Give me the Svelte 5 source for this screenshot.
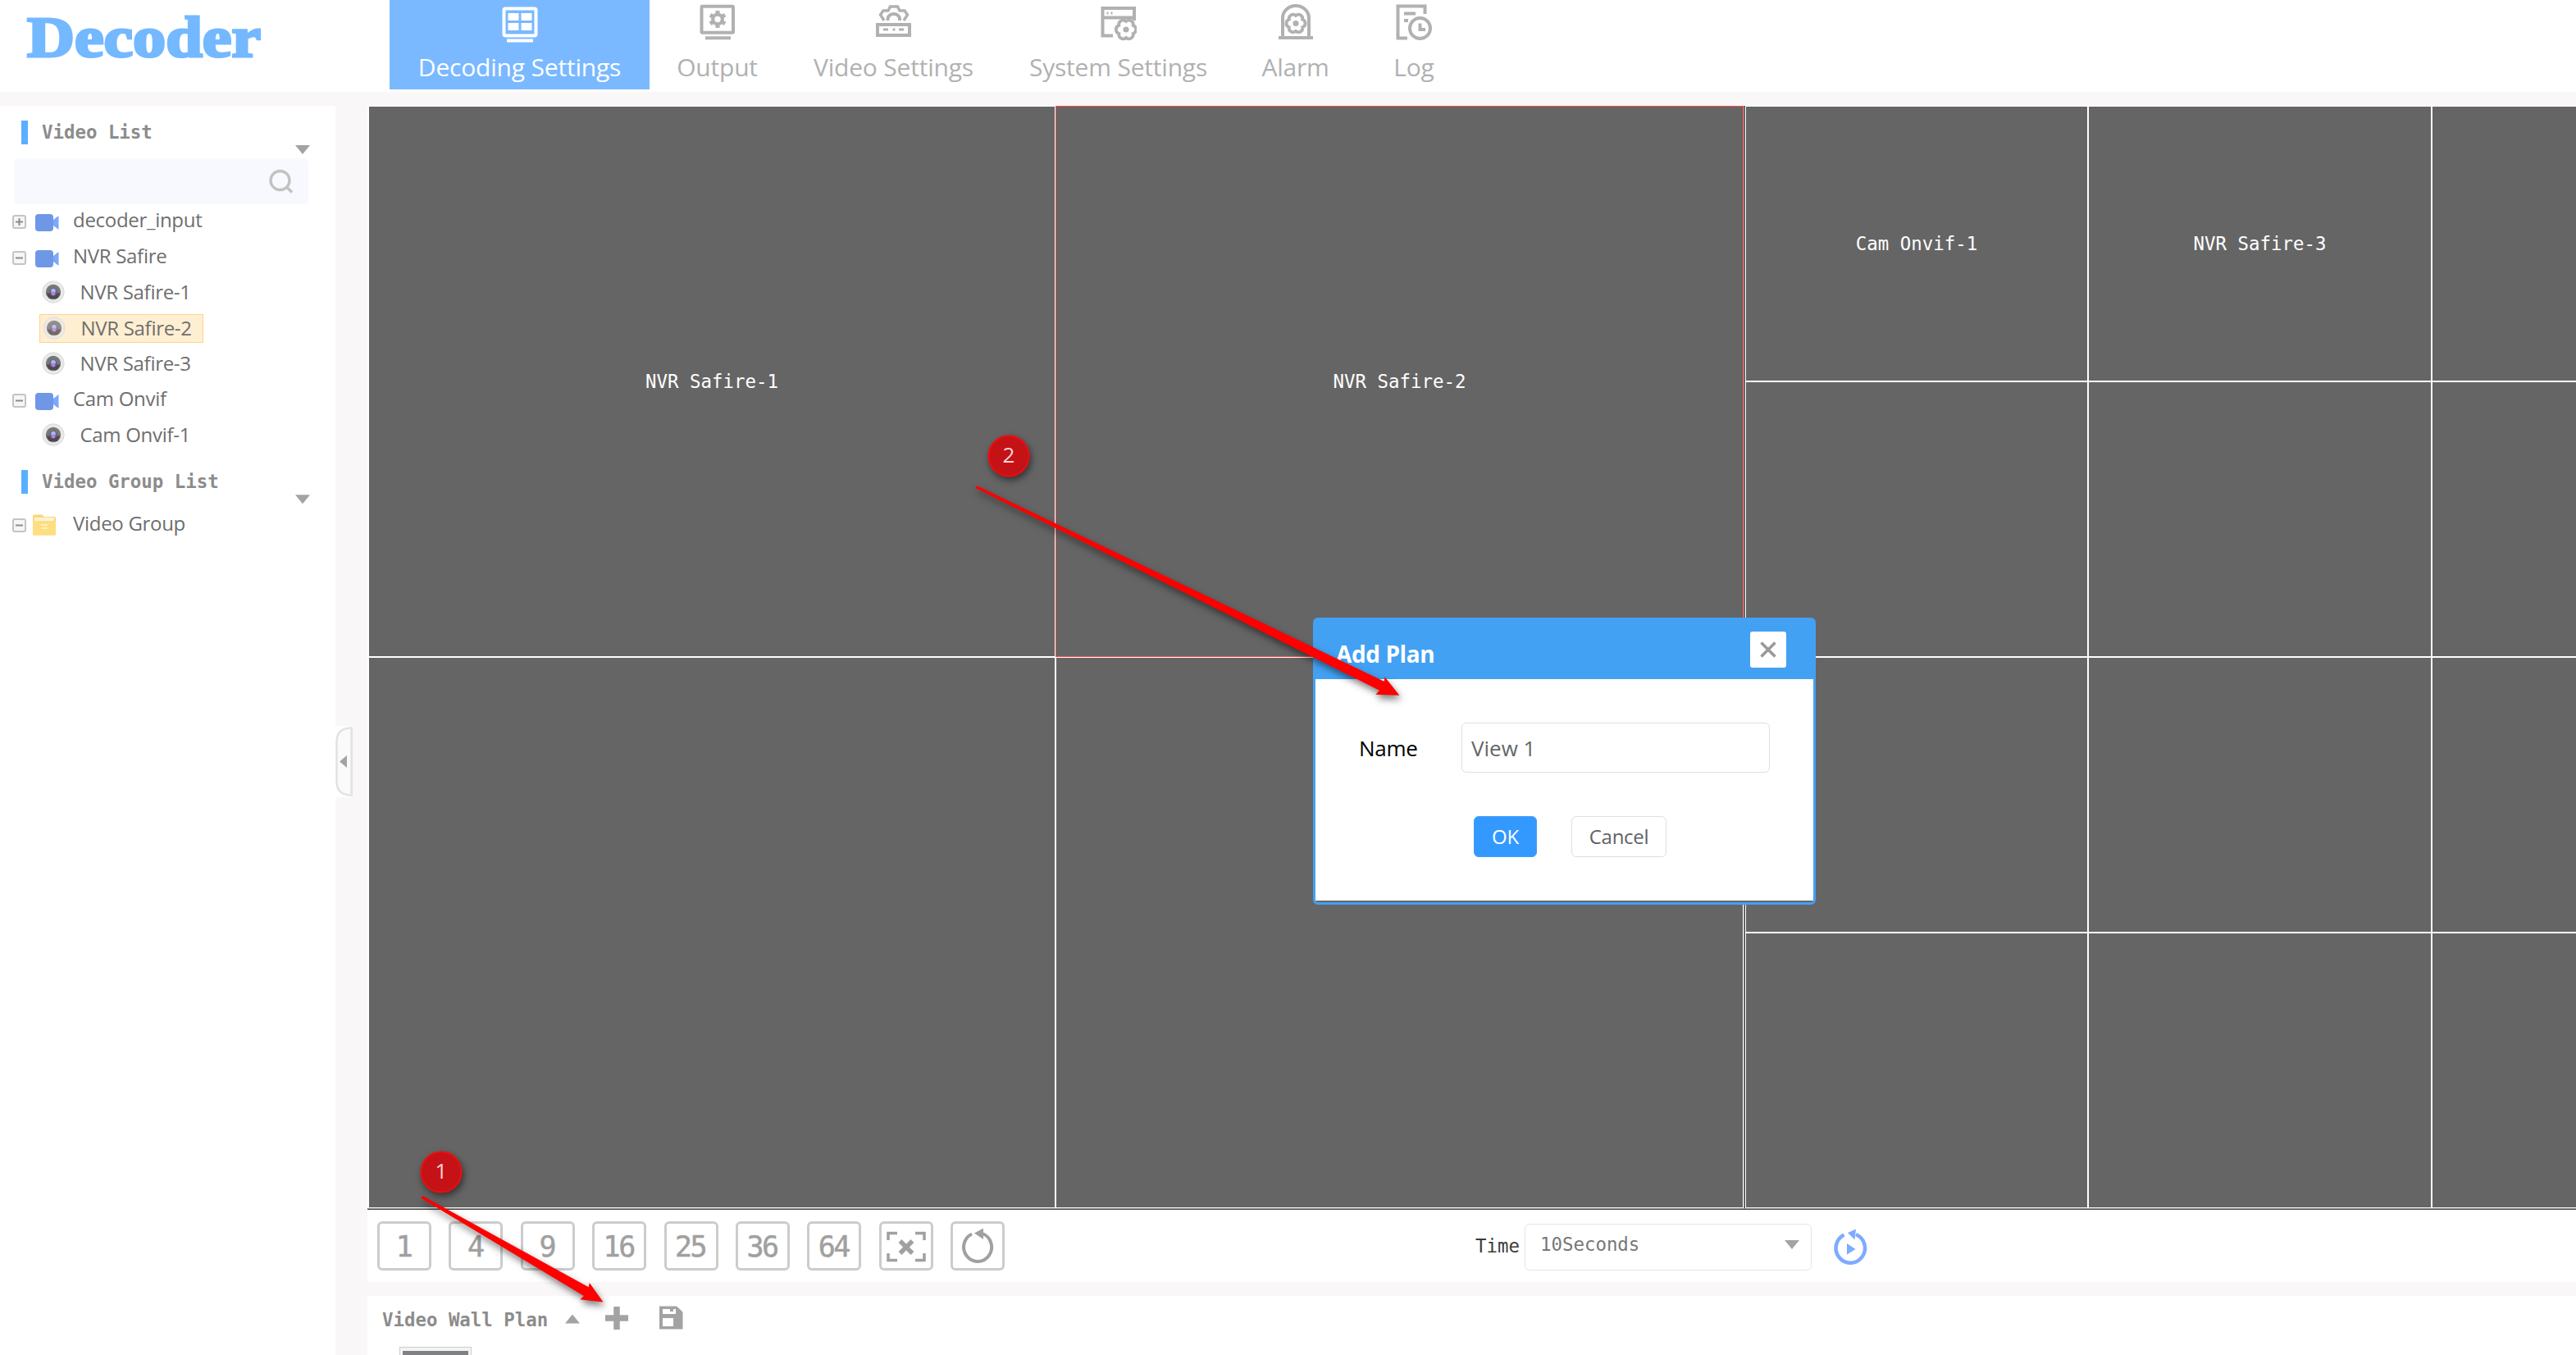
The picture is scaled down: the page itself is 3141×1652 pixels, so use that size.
<script lang="ts">
	let planName = "View 1"; // The name typed into the dialog

	const tabs = [
		{ id: "decoding", label: "Decoding Settings", width: 317 },
		{ id: "output", label: "Output", width: 165 },
		{ id: "video", label: "Video Settings", width: 265 },
		{ id: "system", label: "System Settings", width: 283 },
		{ id: "alarm", label: "Alarm", width: 149 },
		{ id: "log", label: "Log", width: 140 },
	];

	const devices = [
		{ name: "decoder_input", open: false, channels: [] },
		{ name: "NVR Safire", open: true, channels: ["NVR Safire-1", "NVR Safire-2", "NVR Safire-3"] },
		{ name: "Cam Onvif", open: true, channels: ["Cam Onvif-1"] },
	];
	const selected = "NVR Safire-2";

	const layouts = [1, 4, 9, 16, 25, 36, 64];

	// The windows of the two screens, row by row
	const leftScreen = ["NVR Safire-1", "NVR Safire-2", "", ""];
	const rightScreen = ["Cam Onvif-1", "NVR Safire-3", ...Array(14).fill("")];

	/**
	 * Outline of a gear with six rounded teeth
	 * @param cx center x
	 * @param cy center y
	 * @param r distance from the center to the notches
	 */
	function gear(cx: number, cy: number, r: number) {
		let d = "";
		for (let i = 0; i <= 6; i++) {
			const a = (i * Math.PI) / 3;
			const x = (cx + r * Math.cos(a)).toFixed(2);
			const y = (cy + r * Math.sin(a)).toFixed(2);
			d += i == 0 ? `M${x} ${y}` : `A${r * 0.53} ${r * 0.53} 0 0 1 ${x} ${y}`;
		}
		return d + "Z";
	}
</script>

<div class="page">
	<header>
		<div class="logo">
			<svg width="320" height="100" viewBox="0 0 320 100">
				<text x="2" y="68" textLength="285" lengthAdjust="spacingAndGlyphs">Decoder</text>
			</svg>
		</div>
		<nav>
			{#each tabs as tab}
				<a class="tab" class:active={tab.id == "decoding"} href="#{tab.id}" style="width: {tab.width}px">
					<svg class="tab-icon" width="44" height="48" viewBox="0 0 44 48">
						{#if tab.id == "decoding"}
							<rect x="2.5" y="6.5" width="39" height="33" rx="2" />
							<path class="solid" d="M7 12h13v9H7zM23 12h13v9H23zM7 24h13v9H7zM23 24h13v9H23z" transform="translate(.5)" />
							<path d="M6 45.500h32" />
						{:else if tab.id == "output"}
							<rect x="2.5" y="3.8" width="38.5" height="32" rx="1" />
							<circle cx="22" cy="19.5" r="5.8" stroke-width="4.2" />
							<path d="M22 9v4M22 26v4M13 14.2l3 2M28 23l3 2M13 24.8l3-2M28 16l3-2" stroke-width="5" />
							<path d="M7 42.3h31" />
						{:else if tab.id == "video"}
							<rect x="2" y="26" width="39" height="13" />
							<path d="M9 32h6M20.5 32h3M28 32h6" stroke-width="3" />
							<path d="M10 21l-4.500-7 3.500-5h6l2.500-5h9l2.500 5h6l3.500 5-4.500 7" stroke-width="3.4" />
							<path d="M14.500 21v-2a7.200 6 0 0 1 14.500 0v2" />
						{:else if tab.id == "system"}
							<path d="M15 39.500H2.500V6h38.500v15M2.500 17.500H41" />
							<path d="M8.500 10.500v3M13.500 10.500v3" stroke-width="2" />
							<path d={gear(31, 32, 10)} fill="#fff" stroke-width="3.8" transform="rotate(30 31 32)" />
							<circle class="solid" cx="31" cy="32" r="3.6" />
						{:else if tab.id == "alarm"}
							<path d="M6 40V18a16 15 0 0 1 32 0v22M1 42h42" />
							<path d={gear(22, 24.5, 9.5)} stroke-width="3.8" transform="rotate(30 22 24.5)" />
							<circle class="solid" cx="22" cy="24.5" r="3.6" />
						{:else}
							<path d="M14 42.500H2.500V3.500h33V13M10 12.500h14M10 21h5" />
							<circle cx="29.500" cy="30.500" r="12.500" />
							<path d="M29.500 24.500V32H36" />
						{/if}
					</svg>
					<span>{tab.label}</span>
				</a>
			{/each}
		</nav>
	</header>

	<div class="body">
		<aside>
			<div class="list-title">
				<h2>Video List</h2>
				<i class="arrow-down"></i>
			</div>
			<div class="search">
				<svg width="32" height="32" viewBox="0 0 32 32">
					<circle cx="14.500" cy="14" r="11.500" />
					<path d="M22 21.500l7 7" />
				</svg>
			</div>
			<ul class="tree">
				{#each devices as device}
					<li class="row">
						<svg class="toggle" width="17" height="17" viewBox="0 0 17 17">
							<rect x="1" y="1" width="15" height="15" rx="2" />
							<path d={device.open ? "M4 8.500h9" : "M4 8.500h9M8.500 4v9"} />
						</svg>
						<svg class="camera" width="29" height="21" viewBox="0 0 29 21">
							<rect width="22" height="21" rx="4" fill="#6e97e6" />
							<path d="M22 7l6.500-5v17L22 14z" fill="#7ea7fb" />
						</svg>
						<span>{device.name}</span>
					</li>
					{#each device.channels as channel}
						<li class="row channel">
							<div class="channel-box" class:selected={channel == selected}>
								<svg width="28" height="28" viewBox="0 0 28 28">
									<circle cx="14" cy="14" r="13.200" fill="#e9e9e9" stroke="#d9d9d9" />
									<circle cx="14" cy="14" r="9.200" fill="#777" />
									<path d="M5.500 15.500h17l-3.500 6.500h-10z" fill="#4b4b4b" />
									<circle cx="14" cy="14" r="4.600" fill="#6a5c88" />
									<circle cx="14" cy="12.700" r="2.800" fill="#9bc4ee" />
									<circle cx="14" cy="16" r="2.400" fill="#c279e4" />
								</svg>
								<span>{channel}</span>
							</div>
						</li>
					{/each}
				{/each}
			</ul>
			<div class="list-title group">
				<h2>Video Group List</h2>
				<i class="arrow-down"></i>
			</div>
			<ul class="tree">
				<li class="row">
					<svg class="toggle" width="17" height="17" viewBox="0 0 17 17">
						<rect x="1" y="1" width="15" height="15" rx="2" />
						<path d="M4 8.500h9" />
					</svg>
					<svg class="folder" width="28" height="26" viewBox="0 0 28 26">
						<path d="M0 2q0-1.500 1.500-1.500h10l2 2.500h13q1.500 0 1.500 1.500V24q0 1.500-1.500 1.500h-25Q0 25.500 0 24z" fill="#fbd777" />
						<path d="M2 4h24v4H2z" fill="#fff3d2" />
						<path d="M0 8h28v16q0 1.500-1.500 1.500h-25Q0 25.500 0 24z" fill="#fddf81" />
						<path d="M10 13h8M10 17h8" stroke="#fff0b8" stroke-width="2" />
					</svg>
					<span>Video Group</span>
				</li>
			</ul>
		</aside>

		<div class="gutter">
			<div class="collapse">
				<svg width="21" height="87" viewBox="0 0 21 87">
					<path d="M19.700 2.500H17Q1.500 4 1.500 19V68Q1.500 83 17 84.500h2.700z" fill="#fafafa" stroke="#e2e2e2" stroke-width="2.500" />
					<path d="M14 36v15l-9-7.500z" fill="#a3a3a3" />
				</svg>
			</div>
		</div>

		<main>
			<section class="wall-panel">
				<div class="wall">
					<div class="screen left">
						{#each leftScreen as name}
							<div class="window" class:current={name == selected}>{name}</div>
						{/each}
					</div>
					<div class="screen right">
						{#each rightScreen as name}
							<div class="window">{name}</div>
						{/each}
					</div>
				</div>
				<div class="toolbar">
					<div class="layouts">
						{#each layouts as layout}
							<button class="layout">{layout}</button>
						{/each}
						<button class="layout">
							<svg width="48" height="38" viewBox="0 0 48 38">
								<path d="M2 11V2.500h11M35 2.500h11V11M46 27v8.500H35M13 35.500H2V27" stroke-width="3.500" />
								<path d="M16.500 12l15 15M31.500 12l-15 15" stroke-width="5.500" />
							</svg>
						</button>
						<button class="layout">
							<svg width="42" height="44" viewBox="0 0 42 44">
								<path d="M14 6.500A17 17.500 0 1 0 27 6" stroke-width="4" />
								<path class="solid" d="M17 5.500L28-.5 28 13z" />
							</svg>
						</button>
					</div>
					<label class="time">
						<span>Time</span>
						<div class="select">
							10Seconds
							<i class="arrow-down"></i>
						</div>
					</label>
					<svg class="cycle" width="42" height="46" viewBox="0 0 42 46">
						<path d="M13.500 7.500A17.700 18 0 1 0 28 7" fill="none" stroke="#7eaaff" stroke-width="4.500" />
						<path d="M18 5l10-4.500-1.500 13z" fill="#7eaaff" />
						<path d="M17 18l10.500 7L17 31.500z" fill="#7eaaff" />
					</svg>
				</div>
			</section>
			<section class="plan-panel">
				<div class="plan-bar">
					<h2>Video Wall Plan</h2>
					<i class="arrow-up"></i>
					<svg class="plus" width="30" height="30" viewBox="0 0 30 30">
						<path d="M15 1v28M1 15h28" stroke="#a3a3a3" stroke-width="7.500" />
					</svg>
					<svg class="save" width="29" height="29" viewBox="0 0 29 29">
						<path fill="#a3a3a3" fill-rule="evenodd" d="M0 .5h21l7.500 7V28.500H0zM4 4v6h16V4h-3v3h-4V4zM4 15v10h13V15z" />
					</svg>
				</div>
				<div class="thumb"><div></div></div>
			</section>
		</main>
	</div>

	<div class="dialog">
		<div class="dialog-head">
			<h3>Add Plan</h3>
			<button class="close" aria-label="Close">
				<svg width="44" height="44" viewBox="0 0 44 44">
					<path d="M13.500 13.500l17 17M30.500 13.500l-17 17" stroke="#999" stroke-width="3.500" />
				</svg>
			</button>
		</div>
		<div class="dialog-body">
			<label class="field">
				<span>Name</span>
				<input bind:value={planName} />
			</label>
			<div class="buttons">
				<button class="ok">OK</button>
				<button class="cancel">Cancel</button>
			</div>
		</div>
	</div>

	<!-- Numbered steps drawn over the page -->
	<svg class="steps" width="3141" height="1652" viewBox="0 0 3141 1652">
		<g class="arrows">
			<path d="M513 1460.500l2.500-2.500L717.700 1569.300 718.800 1564 735.500 1587.500 707.300 1584.300 712 1580z" />
			<path d="M1189.500 595l1.500-3L1687.700 830.700 1688.500 825.300 1706.400 847.700 1677.400 846.700 1682 841.700z" />
		</g>
		<g class="badges">
			<circle cx="538" cy="1429" r="24.500" />
			<circle cx="1230" cy="556" r="24.500" />
		</g>
		<text x="538" y="1437">1</text>
		<text x="1230" y="564">2</text>
	</svg>
</div>

<style>
	:global(body) {
		margin: 0;
		overflow: hidden;
	}

	.page {
		position: relative;
		width: 3141px;
		height: 1652px;
		overflow: hidden;
		background: #f9f7f8;
		font-family: "Open Sans", "Noto Sans", sans-serif;
		color: #6e6e6e;
	}

	.page * {
		box-sizing: border-box;
	}

	svg {
		display: block;
		flex: none;
	}

	h2, h3, ul {
		margin: 0;
		padding: 0;
		list-style: none;
	}

	button {
		padding: 0;
		font: inherit;
		letter-spacing: inherit;
	}

	header {
		display: flex;
		height: 112px;
		background: #fff;
	}

	.logo {
		width: 475px;
		padding: 1px 0 0 31px;
	}

	.logo text {
		font: bold 69px "Liberation Serif", serif;
		fill: #74b8ff;
		stroke: #74b8ff;
		stroke-width: 3px;
	}

	nav {
		display: flex;
		height: 109px;
	}

	.tab {
		display: flex;
		flex-direction: column;
		align-items: center;
		padding-top: 4px;
		color: #b1b1b1;
		font-size: 30px;
		line-height: 40px;
		letter-spacing: -0.2px;
		text-decoration: none;
		white-space: nowrap;
	}

	.tab span {
		margin-top: 10px;
	}

	.tab.active {
		background: #7ab9ff;
		color: #fff;
	}

	.tab-icon {
		fill: none;
		stroke: currentColor;
		stroke-width: 4px;
	}

	.solid {
		fill: currentColor;
		stroke: none;
	}

	.body {
		display: flex;
		height: 1523px;
		margin-top: 17px;
	}

	aside {
		width: 409px;
		background: #fff;
	}

	.list-title {
		display: flex;
		justify-content: space-between;
		height: 47px;
		margin: 18px 31px 0 26px;
	}

	h2 {
		font: bold 22.4px/29px "DejaVu Sans Mono", monospace;
		color: #8c8c8c;
	}

	.list-title h2 {
		height: 29px;
		padding-left: 17px;
		border-left: 8px solid #5aafff;
	}

	.arrow-down {
		width: 18px;
		height: 11px;
		background: #a3a3a3;
		clip-path: polygon(0 0, 100% 0, 50% 100%);
	}

	.list-title .arrow-down {
		margin-top: 30px;
	}

	.search {
		display: flex;
		justify-content: flex-end;
		width: 359px;
		height: 56px;
		margin: -1px 0 0 17px;
		padding: 13px 17px;
		border-radius: 6px;
		background: #f7f9fe;
	}

	.search svg {
		fill: none;
		stroke: #c2c2c2;
		stroke-width: 3.4px;
	}

	.search + .tree {
		margin-top: -1px;
	}

	.row {
		display: flex;
		align-items: center;
		height: 43.6px;
		padding-left: 15px;
		font-size: 24px;
		line-height: 34px;
		letter-spacing: -0.3px;
		white-space: nowrap;
	}

	.toggle {
		margin: 2px 11px 0 0;
		fill: #f6f6f6;
		stroke: #c4c4c4;
		stroke-width: 2px;
	}

	.toggle path {
		stroke: #8c8c8c;
	}

	.camera {
		margin: 4px 17px 0 0;
	}

	.row > span {
		margin-top: -3px;
	}

	.channel {
		padding-left: 48px;
	}

	.channel-box {
		display: flex;
		align-items: center;
		gap: 18.5px;
		height: 35px;
		margin-top: -1px;
		padding: 0 10px 1px 3px;
	}

	.channel-box.selected {
		width: 200px;
		border: 1px solid #ffd38c;
		background: #ffefd2;
	}

	.selected svg {
		opacity: 0.8;
	}

	.list-title.group {
		margin-top: 20px;
	}

	.group + .tree {
		margin-top: -2px;
	}

	.folder {
		margin: 0 21px 0 -3px;
	}

	.gutter {
		display: flex;
		align-items: flex-start;
		width: 39px;
	}

	.collapse {
		margin-top: 756px;
		background: #fff;
	}

	main {
		flex: none;
		width: 2693px;
		overflow: hidden;
	}

	.wall-panel {
		height: 1434px;
		background: #fff;
	}

	.wall {
		display: flex;
		height: 1346px;
		padding-left: 1px;
		border-bottom: 1px solid #4a4a4a;
		background: linear-gradient(#fff, #fff) 0 0 / 1px 1344px no-repeat, #8a8a8a;
	}

	.screen {
		display: grid;
		flex: none;
		height: 1344px;
	}

	.left {
		grid-template: 672px 672px / 838px 839px;
	}

	.right {
		grid-template: repeat(4, 336px) / 418px 419px 419px 419px;
		border-left: 1px solid #4a4a4a;
		margin-left: 1px;
	}

	.window {
		display: flex;
		align-items: center;
		justify-content: center;
		border: 1px solid #fff;
		background: #656565;
		color: #fff;
		font: 22.4px "DejaVu Sans Mono", monospace;
	}

	.window.current {
		border-color: #ff4d4d;
	}

	.toolbar {
		display: flex;
		height: 88px;
		padding: 14px 0 0 12px;
	}

	.layouts {
		display: flex;
		gap: 21.4px;
		width: 1339px;
	}

	.layout {
		display: flex;
		align-items: center;
		justify-content: center;
		width: 66px;
		height: 60px;
		padding: 1px 2px 0 0;
		border: 3px solid #ccc;
		border-radius: 6px;
		background: #fff;
		color: #a0a0a0;
		font: 35px "DejaVu Sans Mono", monospace;
		letter-spacing: -2.5px;
		-webkit-text-stroke: 0.5px #a0a0a0;
	}

	.layout svg {
		margin-left: 2px;
		fill: none;
		stroke: currentColor;
	}

	.time {
		display: flex;
		height: 57px;
		margin-top: 3px;
		color: #3c3c3c;
		font: 22.4px/54px "DejaVu Sans Mono", monospace;
	}

	.time span {
		width: 60px;
	}

	.select {
		display: flex;
		justify-content: space-between;
		width: 350px;
		padding: 0 14px 0 18px;
		border: 1px solid #e4e4e4;
		border-radius: 6px;
		color: #777;
		line-height: 49px;
	}

	.select .arrow-down {
		margin-top: 19px;
	}

	.cycle {
		margin: 9px 0 0 26px;
	}

	.plan-panel {
		height: 72px;
		margin-top: 17px;
		background: #fff;
	}

	.plan-bar {
		display: flex;
		align-items: center;
		height: 53px;
		padding-left: 18px;
	}

	.plan-bar h2 {
		width: 223px;
		margin-top: 5px;
	}

	.arrow-up {
		width: 18px;
		height: 11px;
		margin-top: 3px;
		background: #a3a3a3;
		clip-path: polygon(50% 0, 100% 100%, 0 100%);
	}

	.plus {
		margin-left: 30px;
	}

	.save {
		margin-left: 37px;
	}

	.thumb {
		width: 88px;
		height: 40px;
		margin: 9px 0 0 39px;
		padding: 4px 3px;
		border: 1px solid #ccc;
		background: #f4f4f4;
	}

	.thumb div {
		height: 30px;
		background: #808185;
	}

	.dialog {
		position: absolute;
		left: 1601px;
		top: 753px;
		width: 613px;
		height: 350px;
		border: 3px solid #43a1f3;
		border-radius: 6px;
		background: #656565;
	}

	.dialog-head {
		display: flex;
		justify-content: space-between;
		height: 72px;
		padding: 14px 33px 0 25px;
		background: #43a1f3;
	}

	h3 {
		padding-top: 8px;
		color: #fff;
		font-size: 28px;
		line-height: 38px;
		letter-spacing: -0.4px;
	}

	.close {
		width: 44px;
		height: 44px;
		border: 0;
		border-radius: 3px;
		background: #fff;
	}

	.dialog-body {
		height: 270px;
		padding: 53px 0 0 54px;
		background: #fff;
	}

	.field {
		display: flex;
		color: #000;
		font-size: 26px;
		line-height: 62px;
		letter-spacing: -0.3px;
	}

	.field span {
		width: 124px;
		height: 61px;
		margin-left: -1px;
		padding-right: 1px;
		box-sizing: content-box;
	}

	input {
		width: 376px;
		height: 61px;
		padding: 1px 11px 0;
		border: 1px solid #dcdfe6;
		border-radius: 6px;
		color: #666;
		font: inherit;
		letter-spacing: 0;
	}

	.buttons {
		display: flex;
		gap: 42px;
		padding: 53px 0 0 139px;
		font-size: 24px;
		letter-spacing: -0.3px;
	}

	.buttons button {
		height: 50px;
		padding-bottom: 2px;
		border: 1px solid #dcdfe6;
		border-radius: 6px;
		background: #fff;
		color: #606266;
	}

	.buttons .ok {
		width: 77px;
		border-color: #409eff;
		background: #3399ff;
		color: #fff;
	}

	.buttons .cancel {
		width: 116px;
	}

	.steps {
		position: absolute;
		left: 0;
		top: 0;
		pointer-events: none;
	}

	.arrows {
		fill: #f00;
		filter: drop-shadow(2px 5px 4px rgba(0, 0, 0, 0.5));
	}

	.badges {
		fill: #c41216;
		stroke: #f00c0c;
		stroke-width: 2px;
		filter: drop-shadow(2px 4px 4px rgba(0, 0, 0, 0.5));
	}

	.steps text {
		fill: #f7d6d6;
		font-size: 26px;
		text-anchor: middle;
	}
</style>
